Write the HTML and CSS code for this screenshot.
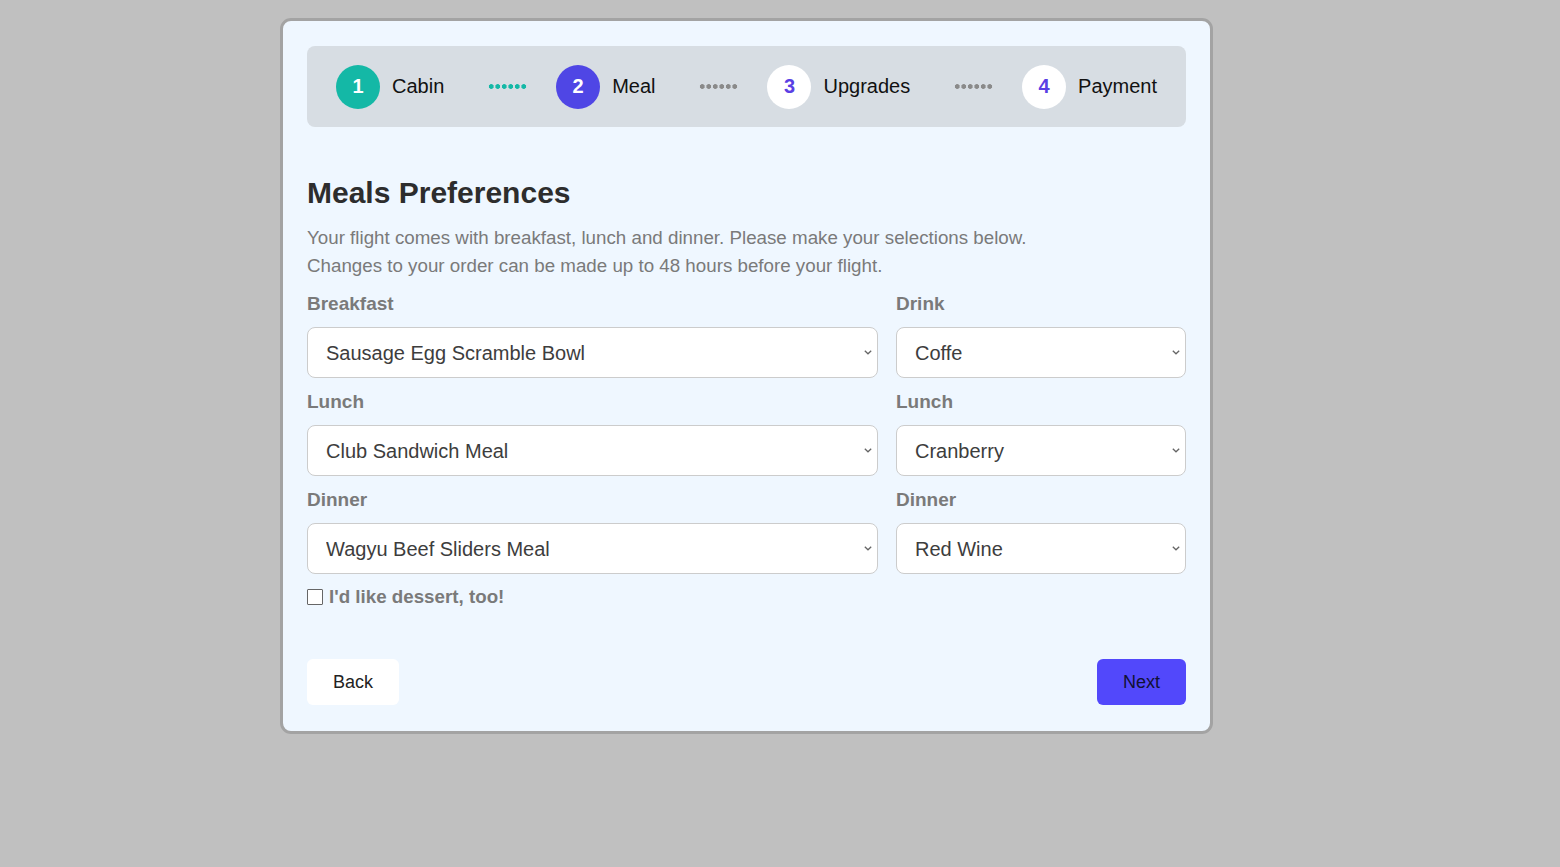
FILE: index.html
```html
<!DOCTYPE html>
<html lang="en">
<head>
<meta charset="utf-8">
<title>Meals Preferences</title>
<link rel="stylesheet" href="styles.css">
</head>
<body>
<main class="card">
  <nav class="stepper">
    <div class="step">
      <span class="num num-done">1</span>
      <span class="step-label">Cabin</span>
    </div>
    <span class="dots dots-done"></span>
    <div class="step">
      <span class="num num-active">2</span>
      <span class="step-label">Meal</span>
    </div>
    <span class="dots"></span>
    <div class="step">
      <span class="num">3</span>
      <span class="step-label">Upgrades</span>
    </div>
    <span class="dots"></span>
    <div class="step">
      <span class="num">4</span>
      <span class="step-label">Payment</span>
    </div>
  </nav>

  <h1 class="title">Meals Preferences</h1>
  <p class="intro">Your flight comes with breakfast, lunch and dinner. Please make your selections below.<br>Changes to your order can be made up to 48 hours before your flight.</p>

  <form class="form">
    <div class="grid">
      <div class="field">
        <label class="label" for="breakfast">Breakfast</label>
        <select id="breakfast" class="select"><option>Sausage Egg Scramble Bowl</option></select>
      </div>
      <div class="field">
        <label class="label" for="drink1">Drink</label>
        <select id="drink1" class="select"><option>Coffe</option></select>
      </div>
      <div class="field">
        <label class="label" for="lunch">Lunch</label>
        <select id="lunch" class="select"><option>Club Sandwich Meal</option></select>
      </div>
      <div class="field">
        <label class="label" for="drink2">Lunch</label>
        <select id="drink2" class="select"><option>Cranberry</option></select>
      </div>
      <div class="field">
        <label class="label" for="dinner">Dinner</label>
        <select id="dinner" class="select"><option>Wagyu Beef Sliders Meal</option></select>
      </div>
      <div class="field">
        <label class="label" for="drink3">Dinner</label>
        <select id="drink3" class="select"><option>Red Wine</option></select>
      </div>
    </div>
    <label class="check">
      <input type="checkbox" class="check-box">
      <span>I'd like dessert, too!</span>
    </label>
    <div class="actions">
      <button type="button" class="btn btn-back">Back</button>
      <button type="button" class="btn btn-next">Next</button>
    </div>
  </form>
</main>
</body>
</html>
```

FILE: styles.css
```css
html, body {
  margin: 0;
  padding: 0;
}

body {
  background: #c0c0c0;
  font-family: "Liberation Sans", Arial, sans-serif;
  min-height: 867px;
}

.card {
  box-sizing: border-box;
  width: 933px;
  margin: 18px 0 0 280px;
  background: #eff7ff;
  border: 3px solid #a3a3a3;
  border-radius: 11px;
  padding: 25px 24px 26px;
}

.stepper {
  display: flex;
  align-items: center;
  justify-content: space-between;
  height: 81px;
  box-sizing: border-box;
  padding: 0 29px;
  background: #d7dde3;
  border-radius: 8px;
}

.step {
  display: flex;
  align-items: center;
  gap: 12px;
}

.num {
  width: 44px;
  height: 44px;
  border-radius: 50%;
  background: #ffffff;
  color: #5a3fe4;
  font-weight: bold;
  font-size: 20px;
  display: flex;
  align-items: center;
  justify-content: center;
}

.num-done {
  background: #14b8a6;
  color: #ffffff;
}

.num-active {
  background: #4f46e5;
  color: #ffffff;
}

.step-label {
  font-size: 20px;
  color: #111111;
}

.dots {
  width: 39px;
  height: 5px;
  margin-left: 15px;
  background-image: radial-gradient(circle, #8a8a8a 2.1px, transparent 2.6px);
  background-size: 6.5px 5px;
  background-repeat: repeat-x;
}

.dots-done {
  background-image: radial-gradient(circle, #14b8a6 2.1px, transparent 2.6px);
}

.title {
  margin: 48px 0 0;
  font-size: 30px;
  line-height: 36px;
  font-weight: bold;
  color: #2d2d2d;
}

.intro {
  margin: 13px 0 0;
  font-size: 18.75px;
  line-height: 28px;
  color: #7a7a7a;
}

.form {
  margin-top: 12px;
}

.grid {
  display: grid;
  grid-template-columns: 571px 290px;
  column-gap: 18px;
}

.field {
  display: flex;
  flex-direction: column;
  margin-bottom: 12px;
}

.label {
  font-size: 19px;
  line-height: 24px;
  font-weight: bold;
  color: #7a7a7a;
  margin-bottom: 11px;
}

.select {
  appearance: none;
  -webkit-appearance: none;
  height: 51px;
  box-sizing: border-box;
  border: 1px solid #cccccc;
  border-radius: 8px;
  background-color: #ffffff;
  background-image: url("data:image/svg+xml,%3Csvg xmlns='http://www.w3.org/2000/svg' width='8' height='5' viewBox='0 0 8 5'%3E%3Cpath d='M0.8 0.8 L4 3.8 L7.2 0.8' fill='none' stroke='%23666' stroke-width='1.3'/%3E%3C/svg%3E");
  background-repeat: no-repeat;
  background-position: right 5px center;
  background-size: 8px 5px;
  padding: 0 24px 0 18px;
  font-family: "Liberation Sans", Arial, sans-serif;
  font-size: 20px;
  color: #3d3d3d;
}

.check {
  display: flex;
  align-items: center;
  gap: 6px;
  height: 24px;
  margin-top: -1px;
  font-size: 18.75px;
  font-weight: bold;
  color: #7a7a7a;
}

.check-box {
  appearance: none;
  -webkit-appearance: none;
  margin: 0;
  width: 16px;
  height: 16px;
  box-sizing: border-box;
  border: 1.5px solid #666666;
  border-radius: 1px;
  background: #ffffff;
}

.actions {
  display: flex;
  justify-content: space-between;
  margin-top: 50px;
}

.btn {
  height: 46px;
  border: none;
  border-radius: 6px;
  font-family: "Liberation Sans", Arial, sans-serif;
  font-size: 18px;
  color: #222222;
}

.btn-back {
  width: 92px;
  background: #ffffff;
}

.btn-next {
  width: 89px;
  background: #5248fb;
  color: #111133;
}
```
